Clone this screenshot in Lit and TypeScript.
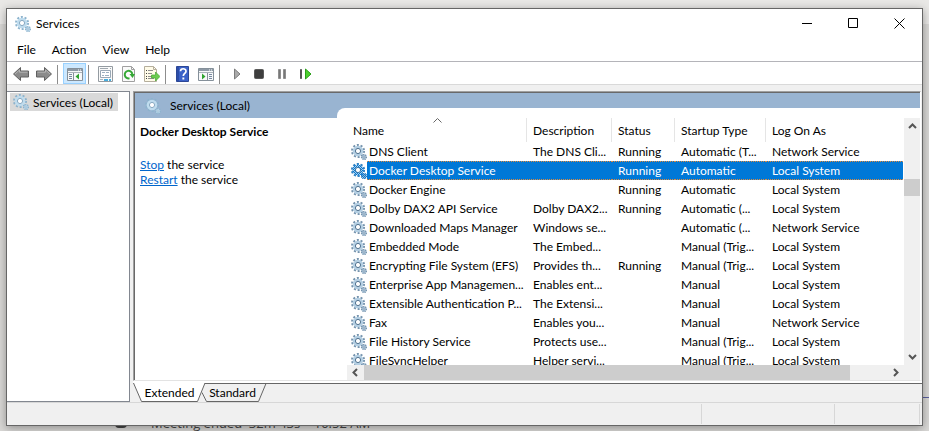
import { LitElement, html, css, svg, nothing } from "lit";
import { customElement, state } from "lit/decorators.js";

interface Service {
  name: string;
  description: string;
  status: string;
  startup: string;
  logon: string;
}

const row = (name: string, description: string, status: string, startup: string, logon: string): Service => ({
  name, description, status, startup, logon,
});

const SERVICES: Service[] = [
  row("DNS Client", "The DNS Cli...", "Running", "Automatic (T...", "Network Service"),
  row("Docker Desktop Service", "", "Running", "Automatic", "Local System"),
  row("Docker Engine", "", "Running", "Automatic", "Local System"),
  row("Dolby DAX2 API Service", "Dolby DAX2...", "Running", "Automatic (...", "Local System"),
  row("Downloaded Maps Manager", "Windows se...", "", "Automatic (...", "Network Service"),
  row("Embedded Mode", "The Embed...", "", "Manual (Trig...", "Local System"),
  row("Encrypting File System (EFS)", "Provides th...", "Running", "Manual (Trig...", "Local System"),
  row("Enterprise App Managemen...", "Enables ent...", "", "Manual", "Local System"),
  row("Extensible Authentication P...", "The Extensi...", "", "Manual", "Local System"),
  row("Fax", "Enables you...", "", "Manual", "Network Service"),
  row("File History Service", "Protects use...", "", "Manual (Trig...", "Local System"),
  row("FileSyncHelper", "Helper servi...", "", "Manual (Trig...", "Local System"),
];

const icon = (content: unknown) =>
  html`<svg class="icon" width="16" height="16" viewBox="0 0 16 16" aria-hidden="true">${content}</svg>`;

/* Pair of cog wheels; the list variant is darker than the window one. */
const gears = (dark = false, selected = false) => {
  const rim = dark ? "#7593ad" : "#8db3cd";
  const face = dark ? "#b4cfe3" : "#bfdcee";
  const hub = dark ? "#4f7290" : "#86a9c2";
  return icon(svg`
    <circle cx="7" cy="7" r="6" fill="none" stroke=${rim} stroke-width="2" stroke-dasharray="2 1.77"/>
    <circle cx="7" cy="7" r="4" fill="#fff" stroke=${face} stroke-width="2.600"/>
    <circle cx="7" cy="7" r="2.600" fill="#fff" stroke=${hub} stroke-width="1"/>
    <circle cx="13" cy="13" r="2.400" fill=${face} stroke=${rim} stroke-width="1.400" stroke-dasharray="1.1 .785"/>
    <circle cx="13" cy="13" r="1" fill="#fff" stroke=${rim} stroke-width=".8"/>
    ${selected
      ? svg`<defs><pattern id="dither" width="2" height="2" patternUnits="userSpaceOnUse">
          <path d="M0 0h1v1H0zM1 1h1v1H1z" fill="#0078d7"/></pattern></defs>
          <circle cx="7" cy="7" r="6" fill="none" stroke="#0078d7" stroke-opacity=".6" stroke-width="2" stroke-dasharray="2 1.77"/>
          <circle cx="7" cy="7" r="4" fill="none" stroke="url(#dither)" stroke-width="3"/>
          <circle cx="13" cy="13" r="3" fill="url(#dither)"/>`
      : nothing}`);
};

const arrow = svg`
  <path d="M.5 8 7.500 1.500V5H15.500V11H7.500V14.500Z" fill="#8b8b8b" stroke="#606060"/>
  <path d="M2 8 6.500 4V6.200H14.500" fill="none" stroke="#b4b4b4"/>`;

const paneFrame = svg`
  <path d="M.5 2.500h15v12H.5z" fill="#f7f8f9" stroke="#85909a"/>
  <path d="M1 3h14v2H1z" fill="#8d99a5"/>
  <path d="M11 3.500h1v1h-1zM13 3.500h1v1h-1z" fill="#fff"/>
  <path d="M1 6.500h14" stroke="#aab2ba"/>`;

const ICONS = {
  back: icon(arrow),
  forward: icon(svg`<g transform="matrix(-1 0 0 1 16 0)">${arrow}</g>`),
  tree: icon(svg`${paneFrame}
    <path d="M6.500 7v7" stroke="#85909a"/>
    <path d="M2 8.500h3M2 10.500h3M2 12.500h3" stroke="#7889a0"/>
    <path d="M12 7.500v6L8.500 10.500z" fill="#2fa32f"/>`),
  actions: icon(svg`${paneFrame}
    <path d="M9.500 7v7" stroke="#85909a"/>
    <path d="M11 8.500h3M11 10.500h3M11 12.500h3" stroke="#7889a0"/>
    <path d="M4 7.500v6L7.500 10.500z" fill="#2fa32f"/>`),
  properties: icon(svg`
    <path d="M.5.5h14v15H.5z" fill="#fafafa" stroke="#949ba1"/>
    <path d="M2 2.500h8M12 2.500h1" stroke="#a0a7ae"/>
    <path d="M2.500 4.500h10v7h-10z" fill="#fff" stroke="#9aa8b5"/>
    <path d="M4 6.500h3M8 6.500h3M4 9.500h2M7 9.500h4" stroke="#9db0c0"/>
    <path d="M2 13.500h3" stroke="#a8b4be"/><path d="M6 13h4v2H6zM11 13h2v2h-2z" fill="#47aede"/>`),
  refresh: icon(svg`
    <path d="M1.500.5h9l3 3v12h-12z" fill="#fafafa" stroke="#a0a0a0"/>
    <path d="M10.500.5v3h3" fill="none" stroke="#a0a0a0"/>
    <path d="M8.500 12.300A3.800 3.800 0 1 1 11.300 8" fill="none" stroke="#35a835" stroke-width="2"/>
    <path d="M8.500 8h5.500l-2.500 4z" fill="#35a835"/>`),
  exportList: icon(svg`
    <path d="M.5.5h9l3 3v12H.5z" fill="#fffbe8" stroke="#b5ae9c"/>
    <path d="M9.500.5v3h3" fill="none" stroke="#b5ae9c"/>
    <path d="M2 4.500h1M2 7.500h1M2 10.500h1M2 12.500h1" stroke="#444"/>
    <path d="M4 4.500h5M4 7.500h4M4 10.500h4M4 12.500h6" stroke="#8e8e8e"/>
    <path d="M7.500 9h4V6l4.500 4.500-4.500 4.500v-3h-4z" fill="#6ccc50" stroke="#49a835" stroke-width=".7"/>`),
  help: icon(svg`
    <path d="M1.500.5h12v15h-12z" fill="#3b62c8" stroke="#2c4796"/>
    <path d="M2 1h2v14H2z" fill="#2b4da8"/>
    <path d="M5.500 5.300C5.500 1.900 11 1.900 11 5.200 11 7.500 8.300 7.400 8.300 10" fill="none" stroke="#fff" stroke-width="1.700"/>
    <path d="M7.400 11.500h1.900v2H7.400z" fill="#fff"/>`),
  start: icon(svg`<path d="M5.500 3v10l5.500-5z" fill="#aaa" stroke="#7d7d7d"/>`),
  stop: icon(svg`<rect x="2.500" y="3.500" width="9" height="9" rx="1" fill="#3e3e3e" stroke="#5a5a5a"/>`),
  pause: icon(svg`<path d="M3.500 3.500h2v9h-2zM8.500 3.500h2v9h-2z" fill="#777" stroke="#8f8f8f"/>`),
  restart: icon(svg`<path d="M2.500 3.500h1v9h-1z" fill="#444" stroke="#555"/>
    <path d="M7.500 3v10l5.500-5z" fill="#4bcf2e" stroke="#2b9e1a"/>`),
};

const chevron = (d: string) =>
  html`<svg width="9" height="9" viewBox="0 0 9 9" aria-hidden="true">
    <path d=${d} fill="none" stroke="#555" stroke-width="2" /></svg>`;

type Tool = [string, unknown] | "separator";

const TOOLS: Tool[] = [
  ["Back", ICONS.back],
  ["Forward", ICONS.forward],
  "separator",
  ["Show/Hide Console Tree", ICONS.tree],
  "separator",
  ["Properties", ICONS.properties],
  ["Refresh", ICONS.refresh],
  ["Export List", ICONS.exportList],
  "separator",
  ["Help", ICONS.help],
  ["Show/Hide Action Pane", ICONS.actions],
  "separator",
  ["Start Service", ICONS.start],
  ["Stop Service", ICONS.stop],
  ["Pause Service", ICONS.pause],
  ["Restart Service", ICONS.restart],
];

@customElement("app-root")
export class AppRoot extends LitElement {
  @state() private selected = 1;

  static styles = css`
    :host {
      display: flex;
      position: relative;
      height: 100vh;
      box-sizing: border-box;
      padding: 8px 6px 5px;
      overflow: hidden;
      background: linear-gradient(#e9e8e6 24px, #d9d8d6 24px);
      font: 12px/15px Lato, "Open Sans", "Noto Sans", sans-serif;
      color: #000;
    }
    * { box-sizing: border-box; }
    button {
      font: inherit;
      color: inherit;
      padding: 0;
      border: 0;
      background: none;
    }
    svg { display: block; flex: none; }
    .window {
      flex: 1;
      min-width: 0;
      display: flex;
      flex-direction: column;
      border: 1px solid #666;
      background: #f0f0f0;
      box-shadow: 0 2px 9px rgba(0, 0, 0, 0.35);
      z-index: 1;
    }
    .titlebar {
      display: flex;
      align-items: center;
      height: 29px;
      padding-left: 8px;
      background: #fff;
    }
    .title { flex: 1; margin: 0 0 0 5px; font: inherit; }
    .caption {
      width: 46px;
      height: 29px;
      display: grid;
      place-items: center;
    }
    .menu {
      display: flex;
      height: 24px;
      padding-left: 2px;
      background: #fff;
      border-bottom: 1px solid #b4b4b9;
    }
    .menu button { padding: 0 8px; }
    .toolbar {
      display: flex;
      align-items: flex-end;
      height: 23px;
      padding-left: 2px;
      background: #fff;
      border-bottom: 1px solid #d9d9d9;
    }
    .tool {
      width: 23px;
      height: 21px;
      display: grid;
      place-items: center;
    }
    .tool .icon { margin-top: 1px; }
    .tool.active { background: #cce8ff; border: 1px solid #99d1ff; }
    .separator { width: 1px; height: 19px; margin: 0 5px 0 2px; background: #8d8d8d; }
    .body {
      flex: 1;
      min-height: 0;
      display: flex;
      gap: 3px;
      padding-top: 6px;
    }
    .tree {
      width: 123px;
      padding: 1px 3px;
      background: #fff;
      border: 1px solid #828790;
      border-left: 0;
    }
    .node {
      display: flex;
      align-items: center;
      gap: 4px;
      width: 108px;
      height: 18px;
      padding-left: 3px;
      background: #d9d9d9;
      white-space: nowrap;
    }
    .result { flex: 1; min-width: 0; display: flex; flex-direction: column; }
    .pane {
      flex: 1;
      min-height: 0;
      display: flex;
      flex-direction: column;
      margin-right: 1px;
      border: 1px solid;
      border-color: #a0a0a0 #fff #e3e3e3 #a0a0a0;
      background: #fff;
      box-shadow: inset 1px 1px #696969;
      padding: 1px 0 0 1px;
    }
    .banner {
      display: flex;
      align-items: center;
      gap: 9px;
      height: 25px;
      padding-left: 10px;
      background: #99b4d1;
    }
    .split { flex: 1; min-height: 0; display: flex; }
    .details { width: 212px; padding: 6px 5px; }
    .details h2 { margin: 0 0 18px; font: inherit; font-weight: 700; }
    .details p { margin: 0; }
    .details a { color: #0066cc; }
    /* The list overlaps the banner with its rounded corner. */
    .list {
      flex: 1;
      min-width: 0;
      display: grid;
      grid-template: minmax(0, 1fr) 15px / minmax(0, 1fr) 16px;
      position: relative;
    }
    .list::before {
      content: "";
      position: absolute;
      inset: -10px 0 auto -10px;
      height: 10px;
      border-top-left-radius: 8px;
      background: #fff;
    }
    .view { overflow: hidden; padding-right: 1px; }
    table { width: 100%; table-layout: fixed; border-collapse: collapse; }
    .name { width: 180px; }
    .description { width: 85px; }
    .status { width: 63px; }
    .startup { width: 91px; }
    th, td {
      padding: 0 0 0 6px;
      text-align: left;
      font-weight: 400;
      white-space: nowrap;
    }
    th {
      position: relative;
      height: 24px;
      background: linear-gradient(#e5e5e5, #e5e5e5) right / 1px 100% no-repeat;
    }
    th:last-child { background: none; }
    .sort { position: absolute; left: 86px; top: 0; }
    td { height: 19px; }
    td:first-child { padding-left: 4px; }
    .cell { display: flex; align-items: center; height: 19px; }
    .label { flex: 1; height: 19px; padding-left: 2px; line-height: 19px; }
    .selected td:not(:first-child), .selected .label {
      color: #fff;
      background:
        repeating-linear-gradient(90deg, #e08a3c 0 1px, #0078d7 1px 2px) top / 100% 1px no-repeat,
        repeating-linear-gradient(90deg, #e08a3c 0 1px, #0078d7 1px 2px) bottom / 100% 1px no-repeat,
        #0078d7;
    }
    .scroll { display: flex; background: #f0f0f0; }
    .scroll.vertical { flex-direction: column; }
    .scroll button { width: 17px; height: 15px; display: grid; place-items: center; }
    .scroll.vertical button { width: 16px; height: 17px; }
    .track { flex: 1; }
    .thumb { background: #cdcdcd; }
    .horizontal .thumb { width: 93%; height: 100%; }
    .vertical .before { flex: 44; }
    .vertical .thumb { height: 17px; }
    .vertical .after { flex: 152; }
    .corner { background: #f0f0f0; }
    .tabs {
      display: flex;
      position: relative;
      height: 21px;
      padding: 2px 0 0 9px;
      background: linear-gradient(#fff 2px, #666 2px 3px, #f0f0f0 3px);
    }
    .tabs svg { position: absolute; left: 0; top: 2px; }
    .tabs button { position: relative; height: 19px; }
    .tab-extended { width: 55px; }
    .tab-standard { width: 71px; }
    .statusbar {
      display: flex;
      justify-content: flex-end;
      height: 23px;
      border-top: 1px solid #d7d7d7;
      padding: 1px 2px 1px 0;
    }
    .part { border-right: 1px solid #d7d7d7; }
    .part-main { flex: 1; }
    .part-mid { width: 133px; }
    .part-end { width: 85px; }
    /* Sliver of the window underneath. */
    .behind {
      position: absolute;
      left: 115px;
      bottom: 0;
      display: flex;
      align-items: flex-end;
      gap: 24px;
      color: #444;
      font: 13px/15px "Open Sans", sans-serif;
      white-space: pre;
    }
    .avatar { width: 12px; height: 12px; margin-bottom: 3px; border: 2px solid #444; border-radius: 4px; }
    .rule { position: absolute; right: 0; bottom: 33px; width: 12px; height: 1px; background: #5a5f9e; }
  `;

  private renderRow(item: Service, index: number) {
    const selected = index === this.selected;
    return html`<tr class=${selected ? "selected" : ""} @click=${() => (this.selected = index)}>
      <td><div class="cell">${gears(true, selected)}<span class="label">${item.name}</span></div></td>
      <td>${item.description}</td>
      <td>${item.status}</td>
      <td>${item.startup}</td>
      <td>${item.logon}</td>
    </tr>`;
  }

  render() {
    return html`
      <div class="behind"><span class="avatar"></span><span>Meeting ended  32m 43s    10:52 AM</span></div>
      <div class="rule"></div>
      <main class="window">
        <header class="titlebar">
          ${gears()}
          <h1 class="title">Services</h1>
          <button class="caption" aria-label="Minimize">
            <svg width="11" height="11"><path d="M0 5.500h10" stroke="#000" /></svg>
          </button>
          <button class="caption" aria-label="Maximize">
            <svg width="11" height="11"><path d="M.5.5h9v9h-9z" fill="none" stroke="#000" /></svg>
          </button>
          <button class="caption" aria-label="Close">
            <svg width="11" height="11"><path d="M.5.5l10 10M10.500.5l-10 10" stroke="#000" /></svg>
          </button>
        </header>
        <nav class="menu">
          ${["File", "Action", "View", "Help"].map((m) => html`<button>${m}</button>`)}
        </nav>
        <div class="toolbar" role="toolbar">
          ${TOOLS.map((tool) =>
            tool === "separator"
              ? html`<span class="separator"></span>`
              : html`<button class="tool ${tool[1] === ICONS.tree ? "active" : ""}" aria-label=${tool[0]}>${tool[1]}</button>`
          )}
        </div>
        <div class="body">
          <aside class="tree"><div class="node">${gears()}<span>Services (Local)</span></div></aside>
          <section class="result">
            <div class="pane">
              <div class="banner">${gears()}<span>Services (Local)</span></div>
              <div class="split">
                <div class="details">
                  <h2>Docker Desktop Service</h2>
                  <p><a href="#stop">Stop</a> the service</p>
                  <p><a href="#restart">Restart</a> the service</p>
                </div>
                <div class="list">
                  <div class="view">
                    <table>
                      <thead>
                        <tr>
                          <th class="name">Name
                            <svg class="sort" width="9" height="5"><path d="M.5 4.500l4-4 4 4" fill="none" stroke="#666" /></svg>
                          </th>
                          <th class="description">Description</th>
                          <th class="status">Status</th>
                          <th class="startup">Startup Type</th>
                          <th>Log On As</th>
                        </tr>
                      </thead>
                      <tbody>${SERVICES.map((s, i) => this.renderRow(s, i))}</tbody>
                    </table>
                  </div>
                  <div class="scroll vertical">
                    <button aria-label="Scroll up">${chevron("M1 6l3.500-3.500L8 6")}</button>
                    <div class="before"></div>
                    <div class="thumb"></div>
                    <div class="after"></div>
                    <button aria-label="Scroll down">${chevron("M1 3l3.500 3.500L8 3")}</button>
                  </div>
                  <div class="scroll horizontal">
                    <button aria-label="Scroll left">${chevron("M6 1L2.500 4.500 6 8")}</button>
                    <div class="track"><div class="thumb"></div></div>
                    <button aria-label="Scroll right">${chevron("M3 1l3.500 3.500L3 8")}</button>
                  </div>
                  <div class="corner"></div>
                </div>
              </div>
            </div>
            <div class="tabs" role="tablist">
              <svg width="136" height="19" aria-hidden="true">
                <path d="M0 0h72l-7 18.500H8.500z" fill="#fff" />
                <path d="M.5 0l8 18.500h56L72 0" fill="none" stroke="#666" />
                <path d="M69 9.500l4.500 9h52L133 .5" fill="none" stroke="#666" />
              </svg>
              <button class="tab-extended" role="tab" aria-selected="true">Extended</button>
              <button class="tab-standard" role="tab" aria-selected="false">Standard</button>
            </div>
          </section>
        </div>
        <footer class="statusbar">
          <div class="part part-main"></div>
          <div class="part part-mid"></div>
          <div class="part part-end"></div>
        </footer>
      </main>
    `;
  }
}
